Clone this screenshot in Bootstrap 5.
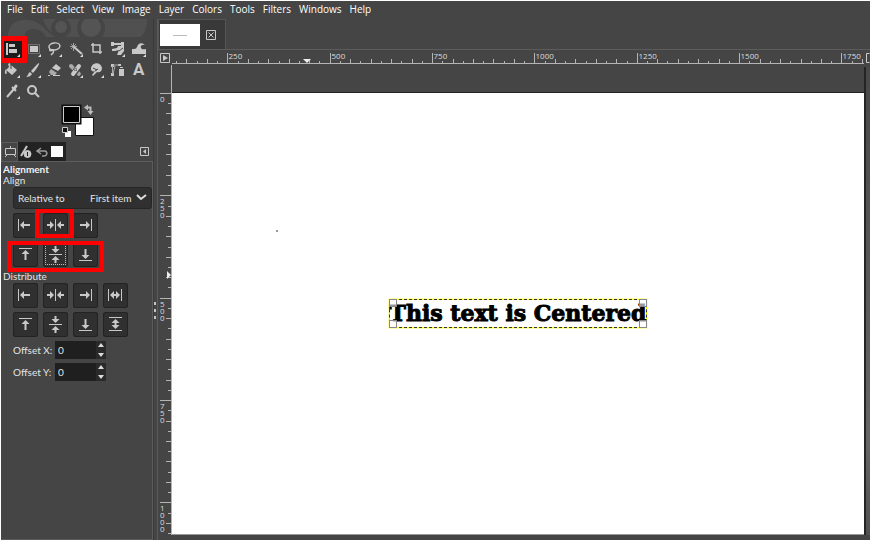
<!DOCTYPE html>
<html lang="en">
<head>
<meta charset="utf-8">
<meta name="viewport" content="width=device-width, initial-scale=1">
<title>Image editor</title>
<link href="https://cdn.jsdelivr.net/npm/bootstrap@5.3.0/dist/css/bootstrap.min.css" rel="stylesheet">
<style>
:root { --panel:#454545; --edge:#2c2c2c; --rim:#5c5c5c; --ink:#e4e4e4; --glyph:#c8c8c8; }
body { font-family:Lato,"Open Sans",sans-serif; font-size:10px; line-height:12px; color:var(--ink); background:var(--panel); }
.app { border-top:1px solid #fff; border-left:1px solid #fff; background:var(--panel); }
.menubar { gap:8px; padding:0 6px; height:18px; font-family:"Open Sans",sans-serif; font-size:10px; line-height:16px; }
.menubar a { color:#fff; }
.dock { width:153px; border-right:1px solid #3a3a3a; }
.grip { width:4px; border-right:1px solid #5a5a5a; }
.grip span { width:2px; height:3px; margin:2px 0; background:#c4c4c4; }
.grip-dots { padding-top:62px; }
.watermark { height:20px; padding-left:7px; }
.tools { display:grid; grid-template-columns:repeat(7,21px); padding-left:1px; }
.tool, .mini { border:0; padding:0; background:none; color:var(--glyph); line-height:0; }
.tool.active { background:#1c1c1c; }
.ring { position:absolute; border:4px solid #f00; pointer-events:none; z-index:2; }
.ring-tool { left:-2px; top:-3px; width:28px; height:27px; border-width:5px; }
.ring-center { left:22px; top:-4px; width:39px; height:29px; }
.ring-rows { left:-6px; top:-1px; width:97px; height:31px; }
.swatches { height:40px; padding-left:59px; }
.dock-tabs { height:19px; }
.dock-tabs .tab { width:16px; height:19px; border:0; padding:0; background:#222; color:var(--glyph); line-height:0; }
.dock-tabs .tab.active { width:17px; background:var(--panel); border:1px solid var(--rim); border-bottom:0; }
.options { border:1px solid var(--rim); border-left:0; padding:1px 2px; }
.options h2 { font-size:10px; line-height:12px; font-weight:700; margin:0; color:#f2f2f2; }
.sub { height:12px; line-height:10px; }
.relative { margin:0 0 4px 10px; height:22px; width:139px; padding:0 4px 1px; background:#303030; border:1px solid #262626; border-radius:3px; }
.relative select { appearance:none; border:0; background:transparent; color:var(--ink); font-size:10px; padding:0 17px 0 0; }
.relative svg { margin-left:-13px; pointer-events:none; }
.aligns { display:flex; gap:5px; margin:0 0 4px 10px; }
.aligns .abtn { display:flex; align-items:flex-start; width:25px; height:25px; border:0; box-shadow:inset 0 0 0 1px #232323; border-radius:3px; padding:0; background:#303030; color:var(--glyph); line-height:0; }
.abtn.focus-dots { outline:1px dotted #bbb; outline-offset:-3px; }
.abtn svg { flex-shrink:0; }
.offset { gap:4px; margin:0 0 4px 10px; }
.offset label { width:38px; white-space:nowrap; }
.offset input { width:41px; height:18px; border:0; padding:0 3px; background:#1f1f1f; color:var(--ink); font-size:10px; appearance:textfield; -moz-appearance:textfield; }
.offset input::-webkit-inner-spin-button { -webkit-appearance:none; }
.spin { width:10px; height:18px; background:#2a2a2a; }
.spin button { height:9px; border:0; padding:0; background:none; color:#ddd; line-height:0; }
.imgtabs { height:31px; border-bottom:1px solid var(--rim); }
.imgtab { width:68px; padding-left:1px; gap:6px; background:#393939; border:1px solid #555; border-bottom:0; }
.thumb { width:40px; height:22px; background:#fff; color:#aaa; }
.work { display:grid; grid-template-columns:14px minmax(0,1fr) 6px; grid-template-rows:15px minmax(0,1fr) 5px; }
.corner { padding:3px 0 0 2px; }
.ruler { width:100%; height:100%; display:block; overflow:hidden; }
.ruler text { font-family:"Open Sans",sans-serif; font-size:8px; fill:#dcdcdc; }
.view { padding-top:27px; }
.sheet { background:#fff; border-top:1px solid #222; border-bottom:1px solid #999; }
.selection { border:1px dashed #333; background:linear-gradient(#fff,#fff) padding-box,#ff0 border-box; box-shadow:0 0 0 1px #ffffb0; color:#000; font:700 22px/27px "DejaVu Serif",serif; -webkit-text-stroke:1px #000; white-space:nowrap; }
.handle { position:absolute; width:8px; height:8px; border:1px solid #888; background:rgba(255,255,255,.6); }
.h1a{left:-1px;top:-1px}.h2a{right:-1px;top:-1px}.h3a{left:-1px;bottom:-1px}.h4a{right:-1px;bottom:-1px}
.speck { position:absolute; left:15%; top:31%; width:2px; height:2px; background:#999; }
.vscroll { border-left:2px solid #242424; background:linear-gradient(#484848,#666 80%,#505050); margin-top:2px; }
</style>
</head>
<body>
<svg width="0" height="0" class="position-absolute" aria-hidden="true">
 <defs>
  <symbol id="left" viewBox="0 0 24 24"><path d="M5.500 6v12" stroke="currentColor"/><path d="M7 12l4-4v3h6v2h-6v3z" fill="currentColor"/></symbol>
  <symbol id="right" viewBox="0 0 24 24"><path d="M18.500 6v12" stroke="currentColor"/><path d="M17 12l-4-4v3H7v2h6v3z" fill="currentColor"/></symbol>
  <symbol id="hmid" viewBox="0 0 24 24"><path d="M12.500 6v12" stroke="currentColor"/><path d="M11 12L7 8v3H4v2h3v3zM14 12l4-4v3h3v2h-3v3z" fill="currentColor"/></symbol>
  <symbol id="hdist" viewBox="0 0 24 24"><path d="M5.500 6v12M18.500 6v12" stroke="currentColor"/><path d="M7 12l4-4v3h2V8l4 4-4 4v-3h-2v3z" fill="currentColor"/></symbol>
  <symbol id="top" viewBox="0 0 24 24"><path d="M6 6.500h13" stroke="currentColor"/><path d="M12.500 8l4 4h-3v6h-2v-6h-3z" fill="currentColor"/></symbol>
  <symbol id="bottom" viewBox="0 0 24 24"><path d="M6 18.500h13" stroke="currentColor"/><path d="M12.500 17l4-4h-3V7h-2v6h-3z" fill="currentColor"/></symbol>
  <symbol id="vmid" viewBox="0 0 24 24"><path d="M6 12.500h13" stroke="currentColor"/><path d="M12.500 11l4-4h-3V4h-2v3h-3zM12.500 14l4 4h-3v3h-2v-3h-3z" fill="currentColor"/></symbol>
  <symbol id="vdist" viewBox="0 0 24 24"><path d="M6 5.500h13M6 18.500h13" stroke="currentColor"/><path d="M12.500 7l4 4h-3v2h3l-4 4-4-4h3v-2h-3z" fill="currentColor"/></symbol>
  <symbol id="more" viewBox="0 0 21 21"><path d="M18 15v3h-3z" fill="#ddd"/></symbol>
 </defs>
</svg>

<div class="app d-flex flex-column vh-100 overflow-hidden">
 <nav class="menubar d-flex flex-shrink-0" aria-label="Main menu">
  <a class="text-decoration-none" href="#">File</a><a class="text-decoration-none" href="#">Edit</a><a class="text-decoration-none" href="#">Select</a><a class="text-decoration-none" href="#">View</a><a class="text-decoration-none" href="#">Image</a><a class="text-decoration-none" href="#">Layer</a><a class="text-decoration-none" href="#">Colors</a><a class="text-decoration-none" href="#">Tools</a><a class="text-decoration-none" href="#">Filters</a><a class="text-decoration-none" href="#">Windows</a><a class="text-decoration-none" href="#">Help</a>
 </nav>

 <div class="d-flex flex-grow-1 overflow-hidden">
  <aside class="dock d-flex flex-column flex-shrink-0">
   <div class="watermark"><svg width="139" height="18" viewBox="0 0 139 18" aria-hidden="true" class="d-block"><path d="M0 18C0 4 10 0 20 1c14 1 17 12 28 17H38c-3-6-7-8-13-8-9 0-9 8-7 8z M35 0c4 12 12 18 22 18h75c6-4 7-12 7-18z" fill="#505050"/><circle cx="53" cy="9" r="10" fill="#454545"/><circle cx="53" cy="8" r="6" fill="#545454"/><circle cx="83" cy="9" r="14" fill="#454545"/><circle cx="83" cy="8" r="10" fill="#545454"/></svg></div>

   <div class="tools position-relative">
    <button class="tool active" aria-label="Align"><svg width="21" height="21" fill="currentColor"><path d="M4 4h2v12H4zM7 5h6v3H7zM7 10h8v4H7z"/><use href="#more"/></svg></button>
    <button class="tool" aria-label="Rectangle select"><svg width="21" height="21"><path d="M5.500 5.500h11v9h-11z" fill="none" stroke="#999" stroke-dasharray="1 1"/><path d="M7 7h8v6H7z" fill="currentColor"/><use href="#more"/></svg></button>
    <button class="tool" aria-label="Free select"><svg width="21" height="21" fill="none" stroke="currentColor" stroke-width="1.500"><ellipse cx="10.500" cy="7.500" rx="5.500" ry="3.500" transform="rotate(-8 10 8)"/><path d="M6 10c-1 2 1 2 2 1s2 1 1 3l-2 2"/><use href="#more" stroke="none"/></svg></button>
    <button class="tool" aria-label="Fuzzy select"><svg width="21" height="21"><path d="M9 8l8 7" stroke="currentColor" stroke-width="2"/><path d="M8.500 4v8M5 7.500h7M6 5l5 5M11 5l-5 5" stroke="currentColor" stroke-width=".7"/><use href="#more"/></svg></button>
    <button class="tool" aria-label="Crop"><svg width="21" height="21" fill="none" stroke="currentColor" stroke-width="1.500"><path d="M7 4v9h9M5 6h9v9"/></svg></button>
    <button class="tool" aria-label="Transform"><svg width="21" height="21" fill="currentColor"><path d="M4 3h3v1h7V3h3v4h-3V6H7v1H4zM11 7h6v5l-3 4h-4l2-5-4 1H5v-2l5-1z"/><path d="M12 12l4-3" stroke="#454545"/><use href="#more"/></svg></button>
    <button class="tool" aria-label="Warp"><svg width="21" height="21" fill="currentColor"><path d="M4 15v-5c3 0 4 0 5-2 1-4 5-5 8-2-3-1-5 1-4 3 1 2 3 1 5 1v5z"/><use href="#more"/></svg></button>

    <button class="tool" aria-label="Bucket fill"><svg width="21" height="21" fill="currentColor"><path d="M9 5l6 5-5 5-6-5 3-3-1-3 2-1 1 3z"/><path d="M4 9c-2 3-1 5 0 5s1-2 0-5z"/><path d="M9 4v5" stroke="#454545"/><use href="#more"/></svg></button>
    <button class="tool" aria-label="Paintbrush"><svg width="21" height="21" fill="currentColor"><path d="M16 3c1 1-4 8-6 10l-2-2c2-2 7-8 8-8zM7 12l2 2c-1 2-3 3-6 3 2-1 2-4 4-5z"/><use href="#more"/></svg></button>
    <button class="tool" aria-label="Eraser"><svg width="21" height="21" fill="currentColor"><path d="M12 4l5 4-3 3-6-3z"/><path d="M7 9l6 4-2 2H7l-2-3z" fill="#aaa"/><path d="M4 15.500h2M9 15.500h7" stroke="currentColor"/></svg></button>
    <button class="tool" aria-label="Heal"><svg width="21" height="21"><path d="M6 6l8 8" stroke="#aaa" stroke-width="4" stroke-linecap="round" stroke-dasharray="2 1"/><path d="M14 6l-6 9" stroke="#454545" stroke-width="6"/><path d="M14 6l-6 8" stroke="currentColor" stroke-width="4" stroke-linecap="round"/><path d="M11 8v4M9 10h4" stroke="#454545" stroke-dasharray="1 1"/><use href="#more"/></svg></button>
    <button class="tool" aria-label="Smudge"><svg width="21" height="21" fill="currentColor"><path d="M5 9c0-7 10-8 11-1 0 3-2 5-5 4l-4 4-1-1 3-4c-2 1-4 0-4-2z"/><path d="M7 8l4 2M9 11l3-2" stroke="#454545"/><use href="#more"/></svg></button>
    <button class="tool" aria-label="Paths"><svg width="21" height="21" fill="currentColor"><path d="M4 4h3v3H4zM11 4h3v2h-3zM4 13h3v3H4zM12 9h5v7h-5zM13 7h3v1h-3z"/><path d="M6 5h6M5.500 6v8M8 6l-2 8" fill="none" stroke="#aaa"/></svg></button>
    <button class="tool" aria-label="Text"><svg width="21" height="21"><text x="5" y="15" font-family="Roboto,sans-serif" font-size="17" font-weight="700" fill="currentColor">A</text></svg></button>

    <button class="tool" aria-label="Color picker"><svg width="21" height="21"><path d="M5 16l7-8" stroke="currentColor" stroke-width="2"/><path d="M10 6l4 4" stroke="currentColor" stroke-width="2"/><path d="M12 8l2-3" stroke="currentColor" stroke-width="3" stroke-linecap="round"/><use href="#more"/></svg></button>
    <button class="tool" aria-label="Zoom"><svg width="21" height="21" fill="none" stroke="currentColor" stroke-width="2"><circle cx="9" cy="9" r="4"/><path d="M12 12l4 4"/></svg></button>
    <span class="ring ring-tool"></span>
   </div>

   <div class="swatches"><svg width="36" height="36" viewBox="0 0 36 36" role="img" aria-label="Foreground black, background white"><path d="M15.500 15.500h18v18h-18z" fill="#fff" stroke="#111"/><path d="M2.500 3.500h18v18h-18z" fill="#000" stroke="#111" stroke-width="2"/><path d="M3.500 4.500h16v16h-16z" fill="#000" stroke="#ccc"/><path d="M26 5.500h4.500v4" fill="none" stroke="#bbb" stroke-width="2"/><path d="M24 5.500l4-3v6zM30.500 13l-3-4h6z" fill="#bbb"/><path d="M5 29h6v6H5z" fill="#fff"/><path d="M2.500 25.500h5v5h-5z" fill="#111" stroke="#ccc"/></svg></div>

   <div class="dock-tabs d-flex" role="tablist">
    <button class="tab active" role="tab" aria-label="Tool options"><svg width="14" height="18" fill="none" stroke="currentColor"><path d="M2.500 5.500h10v6h-10zM7.500 3v3M4 12l-2 2M11 12l2 2"/></svg></button>
    <button class="tab" role="tab" aria-label="Device status"><svg width="16" height="19" fill="none" stroke="currentColor"><path d="M9 4L3 14" stroke-width="2"/><circle cx="9.500" cy="12" r="3.500" fill="currentColor"/><path d="M9.500 10v4" stroke="#222"/></svg></button>
    <button class="tab" role="tab" aria-label="Undo history"><svg width="16" height="19" fill="none" stroke="#999" stroke-width="1.500"><path d="M7 6L3 9l4 3M3 9h8c3 1 2 5-1 5H8"/></svg></button>
    <button class="tab" role="tab" aria-label="Images"><svg width="16" height="19"><path d="M1 4h12v11H1z" fill="#fff"/></svg></button>
    <button class="mini ms-auto me-1" aria-label="Tab menu"><svg width="9" height="19" fill="none" stroke="currentColor"><path d="M.5 5.500h8v8h-8z"/><path d="M6 7v5L3 9.500z" fill="currentColor" stroke="none"/></svg></button>
   </div>

   <section class="options flex-grow-1">
    <h2>Alignment</h2>
    <div class="sub">Align</div>
    <div class="relative d-flex align-items-center">
     <label for="rel" class="me-auto">Relative to</label>
     <select id="rel"><option>First item</option></select>
     <svg width="11" height="7" fill="none" stroke="#ddd" stroke-width="2"><path d="M1 1l4 4 5-4"/></svg>
    </div>
    <div class="aligns position-relative">
     <button class="abtn" aria-label="Align left"><svg width="24" height="24"><use href="#left"/></svg></button>
     <button class="abtn" aria-label="Align center"><svg width="24" height="24"><use href="#hmid"/></svg></button>
     <button class="abtn" aria-label="Align right"><svg width="24" height="24"><use href="#right"/></svg></button>
     <span class="ring ring-center"></span>
    </div>
    <div class="aligns position-relative">
     <button class="abtn" aria-label="Align top"><svg width="24" height="24"><use href="#top"/></svg></button>
     <button class="abtn focus-dots" aria-label="Align middle"><svg width="24" height="24"><use href="#vmid"/></svg></button>
     <button class="abtn" aria-label="Align bottom"><svg width="24" height="24"><use href="#bottom"/></svg></button>
     <span class="ring ring-rows"></span>
    </div>
    <div class="sub">Distribute</div>
    <div class="aligns">
     <button class="abtn" aria-label="Distribute left"><svg width="24" height="24"><use href="#left"/></svg></button>
     <button class="abtn" aria-label="Distribute centers"><svg width="24" height="24"><use href="#hmid"/></svg></button>
     <button class="abtn" aria-label="Distribute right"><svg width="24" height="24"><use href="#right"/></svg></button>
     <button class="abtn" aria-label="Distribute evenly across"><svg width="24" height="24"><use href="#hdist"/></svg></button>
    </div>
    <div class="aligns">
     <button class="abtn" aria-label="Distribute top"><svg width="24" height="24"><use href="#top"/></svg></button>
     <button class="abtn" aria-label="Distribute middles"><svg width="24" height="24"><use href="#vmid"/></svg></button>
     <button class="abtn" aria-label="Distribute bottom"><svg width="24" height="24"><use href="#bottom"/></svg></button>
     <button class="abtn" aria-label="Distribute evenly down"><svg width="24" height="24"><use href="#vdist"/></svg></button>
    </div>
    <div class="offset d-flex align-items-center">
     <label for="ox">Offset X:</label>
     <div class="d-flex"><input id="ox" type="number" value="0"><div class="spin d-flex flex-column"><button aria-label="Increase X"><svg width="8" height="9"><path d="M1 6l3-4 3 4z" fill="currentColor"/></svg></button><button aria-label="Decrease X"><svg width="8" height="9"><path d="M1 3l3 4 3-4z" fill="currentColor"/></svg></button></div></div>
    </div>
    <div class="offset d-flex align-items-center">
     <label for="oy">Offset Y:</label>
     <div class="d-flex"><input id="oy" type="number" value="0"><div class="spin d-flex flex-column"><button aria-label="Increase Y"><svg width="8" height="9"><path d="M1 6l3-4 3 4z" fill="currentColor"/></svg></button><button aria-label="Decrease Y"><svg width="8" height="9"><path d="M1 3l3 4 3-4z" fill="currentColor"/></svg></button></div></div>
    </div>
   </section>
  </aside>

  <div class="grip grip-dots d-flex flex-column justify-content-center flex-shrink-0"><span></span><span></span><span></span></div>

  <main class="d-flex flex-column flex-grow-1 overflow-hidden">
   <div class="imgtabs d-flex flex-shrink-0">
    <div class="imgtab d-flex align-items-center">
     <div class="thumb"><svg width="40" height="22" class="d-block"><path d="M13 11.500h14" stroke="#bbb"/></svg></div>
     <button class="mini" aria-label="Close image"><svg width="10" height="10" fill="none" stroke="currentColor"><path d="M.5.5h9v9h-9zM2.500 2.500l5 5M7.500 2.500l-5 5"/></svg></button>
    </div>
   </div>
   <div class="work flex-grow-1">
    <div class="corner"><button class="mini d-block" aria-label="Image menu"><svg width="10" height="10" fill="none" stroke="currentColor"><path d="M.5.5h9v9h-9z"/><path d="M3 2v6l5-3z" fill="currentColor" stroke="none"/></svg></button></div>
    <svg class="ruler" id="hr" aria-hidden="true"></svg>
    <div class="corner pe-0"><svg width="4" height="10" class="d-block"><path d="M3.500.5h-3v9h3" fill="none" stroke="#ccc"/></svg></div>
    <svg class="ruler" id="vr" aria-hidden="true"></svg>
    <div class="view d-flex">
     <div class="sheet position-relative flex-grow-1 d-flex align-items-center justify-content-center">
      <span class="speck"></span>
      <div class="selection position-relative">This text is Centered<span class="handle h1a"></span><span class="handle h2a"></span><span class="handle h3a"></span><span class="handle h4a"></span></div>
     </div>
    </div>
    <div class="vscroll"></div>
   </div>
  </main>
 </div>
</div>
<script src="https://cdn.jsdelivr.net/npm/bootstrap@5.3.0/dist/js/bootstrap.bundle.min.js"></script>
<script>
// Ten ticks per 250 image pixels; every second tick is longer.
const step = 10.235;
function ruler(id, zero, vertical, pointer) {
  const svg = document.getElementById(id);
  const box = svg.getBoundingClientRect();
  const length = vertical ? box.height : box.width;
  let ticks = '', labels = '';
  for (let n = 0; zero + n * step < length - 1; n++) {
    const p = Math.round(zero + n * step) + 0.5;
    if (p < 1) continue;
    const len = n % 10 === 0 ? 11 : n % 2 === 0 ? 5 : 3;
    ticks += vertical ? `M13 ${p}h${-len}` : `M${p} 14v${-len}`;
    if (n % 10 === 0) {
      const value = String(n * 25);
      if (vertical) [...value].forEach((d, i) => labels += `<text x="2" y="${p + 8 + i * 7}">${d}</text>`);
      else labels += `<text x="${p + 1}" y="9">${value}</text>`;
    }
  }
  const line = vertical ? `M13.500 0V${length}` : `M0 13.500H${length}`;
  const mark = vertical ? `M9 ${pointer - 4}v8l4-4z` : `M${pointer - 4} 9h8l-4 4z`;
  svg.innerHTML = `<path d="${ticks}${line}" fill="none" stroke="#b4b4b4"/>${labels}<path d="${mark}" fill="#eee"/>`;
}
function drawRulers() {
  ruler('hr', -47, false, 135);
  ruler('vr', 28, true, 210);
}
drawRulers();
window.addEventListener('resize', drawRulers);
</script>
</body>
</html>
